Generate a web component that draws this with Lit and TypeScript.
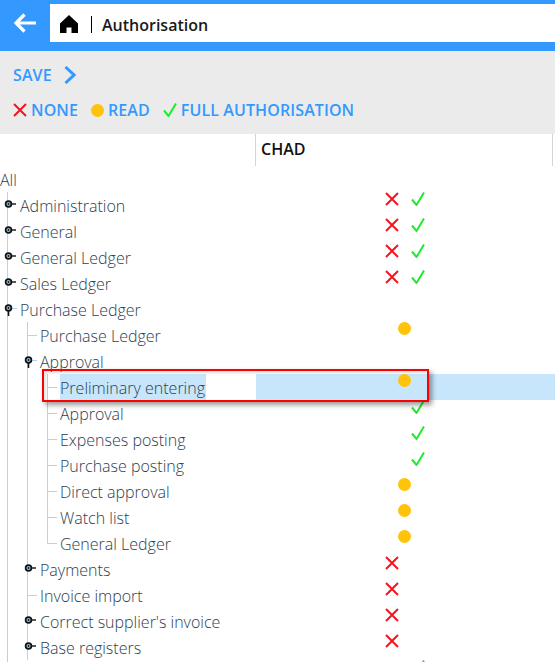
import { LitElement, html, svg, css, nothing } from "lit";
import { customElement } from "lit/decorators.js";

type Perm = "xc" | "d" | "c" | "x" | "";
type Cell = "pipe" | "tee" | "ell" | "plus" | "minus";
interface Row { label: string; cells: Cell[]; perm: Perm; sel?: boolean; }

const rows: Row[] = [
  { label: "All", cells: [], perm: "" },
  { label: "Administration", cells: ["plus"], perm: "xc" },
  { label: "General", cells: ["plus"], perm: "xc" },
  { label: "General Ledger", cells: ["plus"], perm: "xc" },
  { label: "Sales Ledger", cells: ["plus"], perm: "xc" },
  { label: "Purchase Ledger", cells: ["minus"], perm: "" },
  { label: "Purchase Ledger", cells: ["pipe", "tee"], perm: "d" },
  { label: "Approval", cells: ["pipe", "minus"], perm: "" },
  { label: "Preliminary entering", cells: ["pipe", "pipe", "tee"], perm: "d", sel: true },
  { label: "Approval", cells: ["pipe", "pipe", "tee"], perm: "c" },
  { label: "Expenses posting", cells: ["pipe", "pipe", "tee"], perm: "c" },
  { label: "Purchase posting", cells: ["pipe", "pipe", "tee"], perm: "c" },
  { label: "Direct approval", cells: ["pipe", "pipe", "tee"], perm: "d" },
  { label: "Watch list", cells: ["pipe", "pipe", "tee"], perm: "d" },
  { label: "General Ledger", cells: ["pipe", "pipe", "ell"], perm: "d" },
  { label: "Payments", cells: ["pipe", "plus"], perm: "x" },
  { label: "Invoice import", cells: ["pipe", "tee"], perm: "x" },
  { label: "Correct supplier's invoice", cells: ["pipe", "plus"], perm: "x" },
  { label: "Base registers", cells: ["pipe", "plus"], perm: "x" },
  { label: "", cells: ["pipe"], perm: "c" },
];

const xIcon = html`<svg class="ico" viewBox="0 0 14 14" width="14" height="14"><path d="M1 1 13 13M13 1 1 13" fill="none" stroke="#f5141e" stroke-width="2"/></svg>`;
const checkIcon = html`<svg class="ico" viewBox="0 0 14 14" width="14" height="14"><path d="M1 7.5 5.5 13 13 0.5" fill="none" stroke="#1aef2a" stroke-width="2"/></svg>`;
const dotIcon = html`<svg class="ico" viewBox="0 0 13 13" width="13" height="13"><circle cx="6.5" cy="6.5" r="6.5" fill="#ffc30b"/></svg>`;

const LINE = "#b4d3f2";

@customElement("app-root")
export class AppRoot extends LitElement {
  static styles = css`
    :host { display: block; position: relative; width: 555px; height: 662px; overflow: hidden; background: #fff;
      font-family: "Open Sans", "Noto Sans", sans-serif; font-size: 16px; color: #000; }
    .top { background: #3399ff; height: 51px; box-sizing: border-box; padding: 4px 0 9px; display: flex; }
    .back { width: 50px; display: flex; align-items: center; justify-content: center; }
    .crumb { flex: 1; background: #fff; display: flex; align-items: center; padding: 3px 0 0 10px; font-weight: 600; font-size: 16px; color: #1a1a1a; }
    .home { margin: -1px 13px 0 0; }
    .sep { width: 1px; height: 17px; background: #000; margin-right: 10px; }
    .tools { background: #ebebeb; height: 83px; box-sizing: border-box; padding: 13px 0 0 13px; color: #3399ff; font-weight: 600; letter-spacing: 0.1px; }
    .save { display: flex; align-items: center; gap: 12px; height: 22px; }
    .legend { display: flex; align-items: center; height: 22px; margin-top: 13px; }
    .legend .ico { flex: none; }
    .lg { display: flex; align-items: center; gap: 4px; margin-right: 13px; }
    .head { display: grid; grid-template-columns: 255px 1fr; height: 32px; }
    .hname { border-left: 1px solid #d4d4d4; border-right: 1px solid #d4d4d4; margin-right: 2px; padding-left: 5px; font-weight: 600; line-height: 30px; color: #111; }
    .row { display: grid; grid-template-columns: 256px 297px 2px; height: 26px; }
    .tree { display: flex; min-width: 0; white-space: nowrap; }
    .cell { flex: none; width: 20px; height: 26px; }
    .guide { display: block; }
    .label { font-size: 16px; font-weight: 300; line-height: 28px; color: #2c3e50; white-space: pre; }
    .row.sel { background: linear-gradient(90deg, #fff 60px, #c7e6fc 60px, #c7e6fc 206px, #fff 206px, #fff 256px, #c7e6fc 256px); }
    .perm { display: flex; justify-content: center; align-items: flex-start; gap: 12px; }
    .perm .hide { visibility: hidden; }
    .ico { display: block; }
    .mark { position: absolute; left: 42px; top: 369px; width: 387px; height: 33px; box-sizing: border-box; border: 2px solid #f00;
      box-shadow: 3px 3px 5px rgba(0, 0, 0, 0.4), inset 2px 2px 3px rgba(0, 0, 0, 0.12); pointer-events: none; }
  `;

  private guide(c: Cell) {
    const v = c === "ell"
      ? svg`<path d="M7.5 0V13.5H17" fill="none" stroke="${LINE}"/>`
      : c === "tee"
        ? svg`<path d="M7.5 0V26M8 13.5H17" fill="none" stroke="${LINE}"/>`
        : svg`<path d="M7.5 0V26" fill="none" stroke="${LINE}"/>`;
    const knob = svg`<circle cx="8.5" cy="12" r="2.9" fill="#8fc4e4" stroke="#111" stroke-width="1.7"/><circle cx="8.5" cy="12" r="0.9" fill="#111"/>`;
    const node = c === "plus"
      ? svg`<path d="M11 12H16" stroke="#222" stroke-width="1.5"/>${knob}`
      : c === "minus"
        ? svg`<path d="M11 12.5H17" stroke="${LINE}"/><path d="M8.5 14V20" stroke="#111" stroke-width="1.6"/>${knob}`
        : nothing;
    return html`<svg class="guide" viewBox="0 0 20 26" width="20" height="26">${v}${node}</svg>`;
  }

  private perm(p: Perm) {
    if (p === "xc") return html`${xIcon}${checkIcon}`;
    if (p === "x") return html`${xIcon}<span class="hide">${checkIcon}</span>`;
    if (p === "c") return html`<span class="hide">${xIcon}</span>${checkIcon}`;
    if (p === "d") return dotIcon;
    return nothing;
  }

  render() {
    return html`
      <div class="top">
        <div class="back">
          <svg viewBox="0 0 24 24" width="24" height="24"><path d="M23 12H3.5M11.5 3.5 3 12l8.5 8.5" fill="none" stroke="#fff" stroke-width="3.2"/></svg>
        </div>
        <div class="crumb">
          <svg class="home" viewBox="0 0 18 18" width="18" height="18"><path d="M9 0 0 8.5V18H6.5V12.5H11.5V18H18V8.5Z" fill="#000"/></svg>
          <span class="sep"></span>
          <span>Authorisation</span>
        </div>
      </div>
      <div class="tools">
        <div class="save">
          <span>SAVE</span>
          <svg viewBox="0 0 12 18" width="12" height="18"><path d="M1.5 1 10 9l-8.5 8" fill="none" stroke="#3399ff" stroke-width="3"/></svg>
        </div>
        <div class="legend">
          <span class="lg">${xIcon}<span>NONE</span></span>
          <span class="lg">${dotIcon}<span>READ</span></span>
          <span class="lg">${checkIcon}<span>FULL AUTHORISATION</span></span>
        </div>
      </div>
      <div class="head"><div></div><div class="hname">CHAD</div></div>
      ${rows.map((r) => html`
        <div class="row ${r.sel ? "sel" : ""}">
          <div class="tree">
            ${r.cells.map((c) => html`<span class="cell">${this.guide(c)}</span>`)}
            <span class="label">${r.label}</span>
          </div>
          <div class="perm">${this.perm(r.perm)}</div>
        </div>`)}
      <div class="mark"></div>
    `;
  }
}
